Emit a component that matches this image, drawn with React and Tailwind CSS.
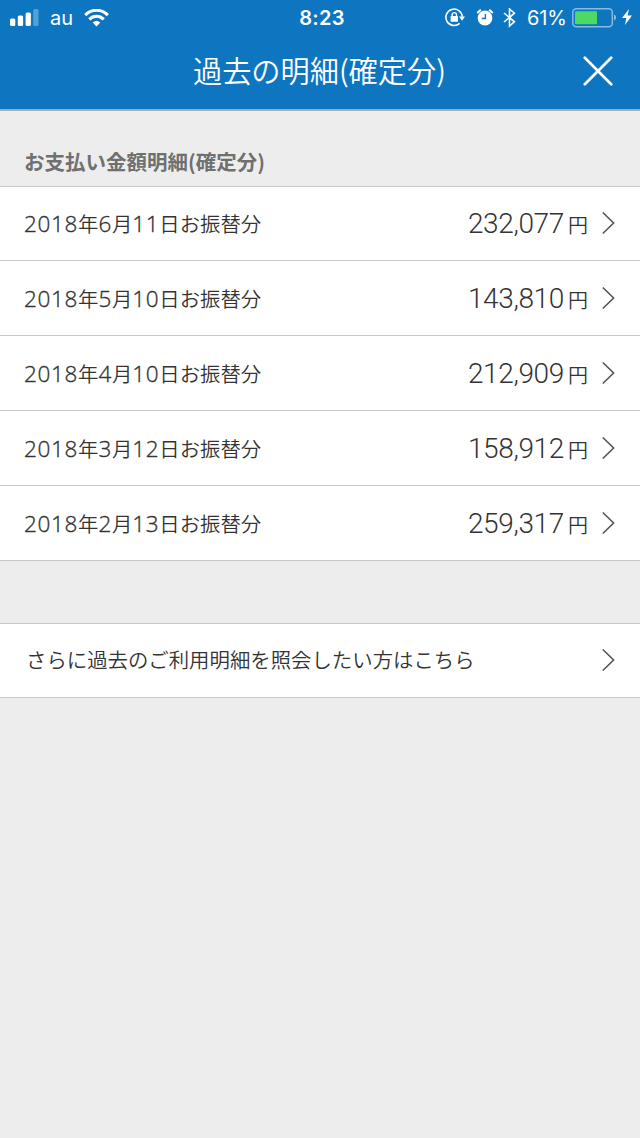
const rows = [
  ['2018', '6', '11', '232,077'],
  ['2018', '5', '10', '143,810'],
  ['2018', '4', '10', '212,909'],
  ['2018', '3', '12', '158,912'],
  ['2018', '2', '13', '259,317'],
];

function Chevron() {
  return (
    <svg className="h-[24px] w-[14px] shrink-0" viewBox="0 0 14 24" fill="none" stroke="#555" strokeWidth="1.6">
      <path d="M1.8 1.5L12.6 12L1.8 22.5" />
    </svg>
  );
}

function Digits({ children }) {
  return <span className="font-['Open_Sans'] text-[22.5px] font-light tracking-[0.65px] [-webkit-text-stroke:0.35px_#333]">{children}</span>;
}

function StatusBar() {
  return (
    <div className="flex h-[35px] items-center text-white">
      <div className="flex flex-1 items-center pl-[10px]">
        <svg className="h-[18px] w-[29px]" viewBox="0 0 29 18" fill="#fff">
          <rect x="0" y="9.5" width="5.3" height="7.5" rx="1.5" />
          <rect x="7.8" y="6.5" width="5.3" height="10.5" rx="1.5" />
          <rect x="15.6" y="3.4" width="5.3" height="13.6" rx="1.5" />
          <rect x="23.2" y="0" width="5.3" height="17" rx="1.5" opacity=".3" />
        </svg>
        <span className="ml-[11px] w-[23px] pt-px font-['Inter'] text-[20px] leading-[35px]">au</span>
        <svg className="ml-[11px] h-[18px] w-[25px]" viewBox="0 0 25 18" fill="none" stroke="#fff" strokeWidth="3.1">
          <path d="M1.2 6.1C7.4 -.3 17.6 -.3 23.8 6.1" />
          <path d="M5.3 10.3C9.3 6.3 15.7 6.3 19.7 10.3" />
          <path d="M8.7 13.6C10.8 11.5 14.2 11.5 16.3 13.6L12.5 17.4Z" fill="#fff" stroke="none" />
        </svg>
      </div>
      <div className="font-['Inter'] text-[20px] font-semibold leading-[35px] tracking-[0.3px] pl-[2px] pt-px">8:23</div>
      <div className="flex flex-1 items-center justify-end pr-[8px]">
        <svg className="h-[20px] w-[20px]" viewBox="0 0 20 20" fill="none" stroke="#fff" strokeWidth="1.6">
          <path d="M14.6 15.4A8.2 8.2 0 1 1 17.3 8.7" />
          <path d="M14 8.5h6l-3 4.2Z" fill="#fff" stroke="none" />
          <rect x="5.6" y="8" width="7.4" height="5.8" rx=".6" fill="#fff" stroke="none" />
          <path d="M7.1 8.5V6.8a2.2 2.2 0 0 1 4.4 0V8.5" strokeWidth="1.3" />
        </svg>
        <svg className="ml-[11px] h-[18px] w-[18px]" viewBox="0 0 18 18" fill="none" stroke="#fff" strokeWidth="1.8">
          <circle cx="9" cy="9" r="7.4" fill="#fff" stroke="none" />
          <path d="M1.2 4L4.8 .8M13.2 .8L16.8 4" strokeWidth="2" />
          <path d="M9.4 5V9.5H5.8" stroke="#0e76c1" strokeWidth="1.4" />
        </svg>
        <svg className="ml-[9px] h-[20px] w-[13px]" viewBox="0 0 13 20" fill="none" stroke="#fff" strokeWidth="1.6">
          <path d="M1 5L11.4 13.8L6.5 18V1L11.4 5.2L1 14" />
        </svg>
        <span className="ml-[11px] w-[40px] pt-px font-['Inter'] text-[20px] leading-[35px] tracking-[-0.2px]">61%</span>
        <svg className="ml-[5px] h-[20px] w-[46px]" viewBox="0 0 46 20" fill="none">
          <rect x="0.8" y="0.8" width="39.5" height="18" rx="3.5" stroke="#fff" strokeOpacity=".5" strokeWidth="1.5" />
          <rect x="3" y="3.3" width="22" height="13" rx="1" fill="#4cd964" />
          <path d="M42 6.5c2.8 1 2.8 5 0 6Z" fill="#fff" fillOpacity=".5" />
        </svg>
        <svg className="ml-[4px] mb-px h-[16px] w-[10px]" viewBox="0 0 10 16" fill="#fff">
          <path d="M7 0L0 9H4.3L3 16L10 6.5H5.6Z" />
        </svg>
      </div>
    </div>
  );
}

export default function App() {
  return (
    <div lang="ja" className="flex min-h-[1138px] w-[640px] flex-col bg-[#ededed] font-['Noto_Sans_CJK_JP',sans-serif] text-[#333]">
      <header className="flex h-[111px] flex-col border-b-2 border-[#a8adb2] bg-[#0e76c1] text-white">
        <StatusBar />
        <div className="flex h-[72px] items-center">
          <h1 className="w-[583px] pl-[193px] pb-[4px] text-[29.2px] font-[350] leading-[68px] whitespace-nowrap">過去の明細(確定分)</h1>
          <svg className="h-[30px] w-[30px]" viewBox="0 0 30 30" stroke="#fff" strokeWidth="2.7" strokeLinecap="round">
            <path d="M1.8 1.8L28.2 28.2M28.2 1.8L1.8 28.2" />
          </svg>
        </div>
      </header>
      <h2 className="h-[75px] pl-[24px] pt-[35px] text-[20.5px] font-bold leading-[30px] text-[#707070]">お支払い金額明細(確定分)</h2>
      <ul className="border-t border-[#c8c8cc]">
        {rows.map(([y, m, d, amount], i) => (
          <li key={i} className="flex h-[75px] items-center border-b border-[#c8c8cc] bg-white pr-[25px] pl-[24px] first:h-[74px] first:pb-px">
            <span className="flex-1 text-[20.4px] font-[350] leading-[30px] whitespace-nowrap">
              <Digits>{y}</Digits>年<Digits>{m}</Digits>月<Digits>{d}</Digits>日お振替分
            </span>
            <span className="pt-px font-['Roboto'] text-[28px] font-light leading-[40px] tracking-[-0.35px]">{amount}</span>
            <span className="mt-[3px] mr-[13px] ml-[4px] text-[20px] font-[350] leading-[30px]">円</span>
            <Chevron />
          </li>
        ))}
      </ul>
      <div className="mt-[62px] flex h-[75px] items-center border-y border-[#c8c8cc] bg-white pr-[25px] pb-[2px] pl-[26px]">
        <span className="mb-[1px] flex-1 text-[20.4px] font-[350] leading-[30px]">さらに過去のご利用明細を照会したい方はこちら</span>
        <Chevron />
      </div>
    </div>
  );
}
